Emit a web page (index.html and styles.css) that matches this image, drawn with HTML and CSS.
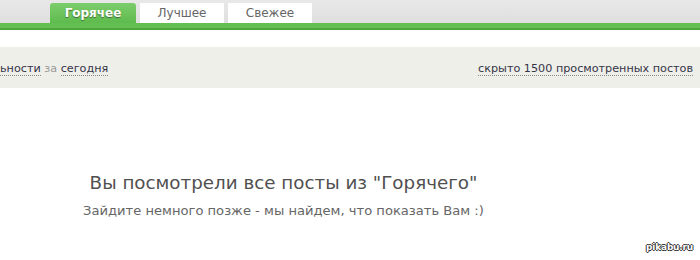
FILE: index.html
```html
<!DOCTYPE html>
<html lang="ru">
<head>
<meta charset="UTF-8">
<title>Горячее</title>
<link rel="stylesheet" href="styles.css">
</head>
<body>
<div class="topbar">
  <div class="tab active">Горячее</div>
  <div class="tab">Лучшее</div>
  <div class="tab">Свежее</div>
</div>
<div class="greenline"></div>
<div class="filters">
  <div class="left">
    <span class="link">ьности</span> <span class="muted">за</span> <span class="link">сегодня</span>
  </div>
  <div class="right">
    <span class="link">скрыто 1500 просмотренных постов</span>
  </div>
</div>
<div class="main">
  <div class="empty">
    <h2>Вы посмотрели все посты из "Горячего"</h2>
    <p>Зайдите немного позже - мы найдем, что показать Вам :)</p>
  </div>
</div>
<div class="watermark">pikabu.ru</div>
</body>
</html>
```

FILE: styles.css
```css
body {
  margin: 0;
  font-family: "DejaVu Sans", Verdana, sans-serif;
  background: #fff;
  width: 700px;
  height: 260px;
  overflow: hidden;
  position: relative;
}
.topbar {
  height: 23px;
  background: linear-gradient(#e8e8e8, #dfdfdf);
  display: flex;
  align-items: flex-end;
  padding-left: 50px;
  gap: 4px;
}
.tab {
  width: 84px;
  height: 20px;
  line-height: 20px;
  text-align: center;
  font-size: 12px;
  color: #666;
  background: #fff;
}
.tab.active {
  width: 86px;
  color: #fff;
  font-weight: bold;
  background: linear-gradient(#7ccd6c, #5fbb4e);
  border-radius: 3px 3px 0 0;
  text-shadow: 0 1px 1px rgba(0, 0, 0, 0.45);
}
.greenline {
  height: 5px;
  background: #63bf52;
  border-bottom: 2px solid #4fa63f;
}
.filters {
  margin-top: 17px;
  height: 40px;
  background: #efefea;
  display: flex;
  justify-content: space-between;
  align-items: center;
  padding: 1px 7px 0 0;
  font-size: 11.2px;
  color: #333;
}
.link {
  color: #343447;
  border-bottom: 1px dotted #888;
}
.muted {
  color: #999;
}
.main {
  width: 567px;
}
.empty {
  padding-top: 83px;
  text-align: center;
}
.empty h2 {
  margin: 0;
  font-size: 18.3px;
  font-weight: normal;
  color: #505050;
  line-height: 24px;
}
.empty p {
  margin: 7px 0 0;
  font-size: 13.1px;
  color: #666;
  line-height: 18px;
}
.watermark {
  position: absolute;
  right: 7px;
  bottom: 8px;
  font-size: 9px;
  font-weight: bold;
  color: #fff;
  letter-spacing: -0.2px;
  text-shadow: 1px 0 0 #333, -1px 0 0 #333, 0 1px 0 #333, 0 -1px 0 #333;
}
```
